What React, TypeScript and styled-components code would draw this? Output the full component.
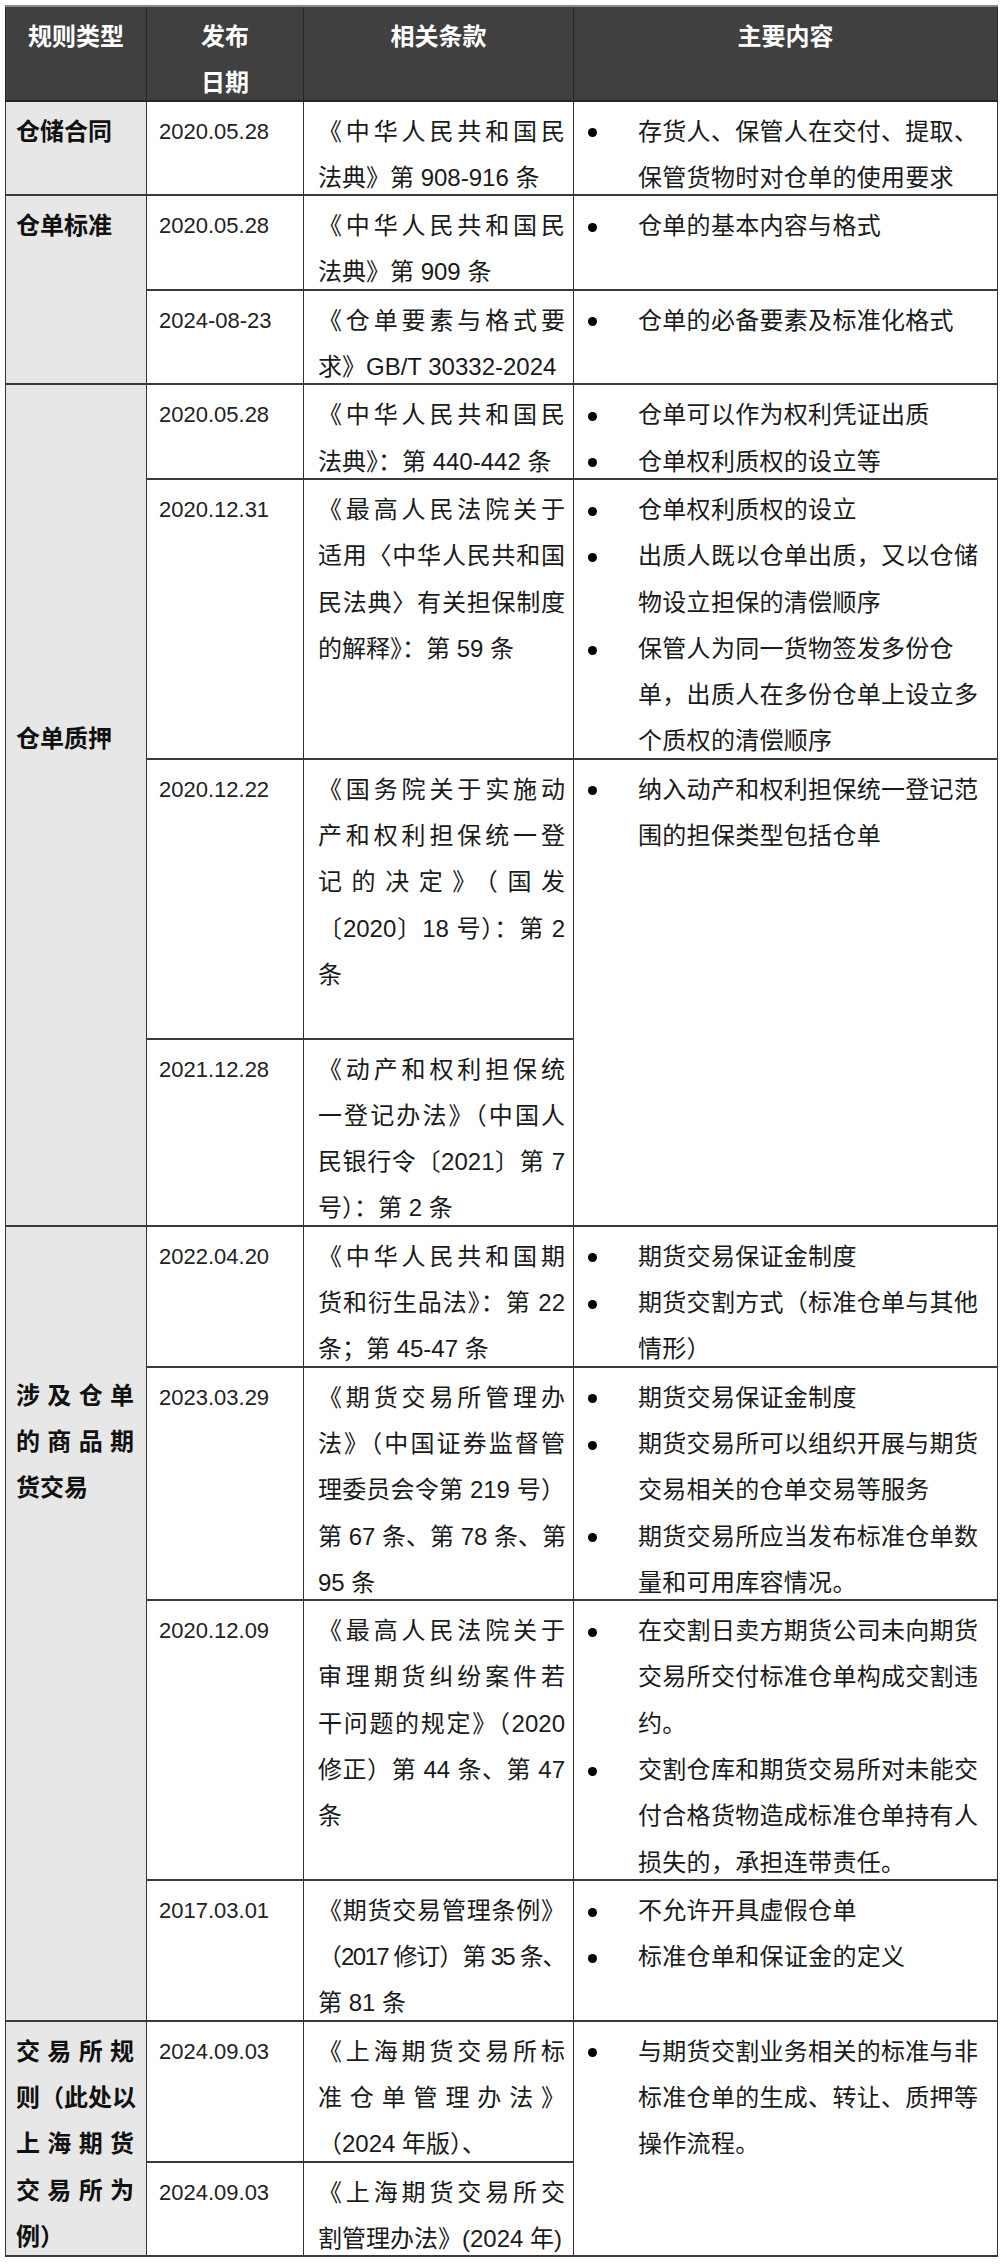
import React, { FC } from "react";
import styled, { createGlobalStyle } from "styled-components";

const LINE = 46.3;

type Row = {
  date: string;
  clause: string[];
  tight?: number[];
  minLines?: number;
  bullets?: string[][];
  span?: number;
};

type Group = {
  title: string[];
  skip?: number;
  rows: Row[];
};

const groups: Group[] = [
  {
    title: ["仓储合同"],
    rows: [
      {
        date: "2020.05.28",
        clause: ["《中华人民共和国民", "法典》第 908-916 条"],
        bullets: [["存货人、保管人在交付、提取、", "保管货物时对仓单的使用要求"]],
      },
    ],
  },
  {
    title: ["仓单标准"],
    rows: [
      {
        date: "2020.05.28",
        clause: ["《中华人民共和国民", "法典》第 909 条"],
        bullets: [["仓单的基本内容与格式"]],
      },
      {
        date: "2024-08-23",
        clause: ["《仓单要素与格式要", "求》GB/T 30332-2024"],
        bullets: [["仓单的必备要素及标准化格式"]],
      },
    ],
  },
  {
    title: ["仓单质押"],
    skip: 7,
    rows: [
      {
        date: "2020.05.28",
        clause: ["《中华人民共和国民", "法典》：第 440-442 条"],
        bullets: [["仓单可以作为权利凭证出质"], ["仓单权利质权的设立等"]],
      },
      {
        date: "2020.12.31",
        clause: [
          "《最高人民法院关于",
          "适用〈中华人民共和国",
          "民法典〉有关担保制度",
          "的解释》：第 59 条",
        ],
        bullets: [
          ["仓单权利质权的设立"],
          ["出质人既以仓单出质，又以仓储", "物设立担保的清偿顺序"],
          [
            "保管人为同一货物签发多份仓",
            "单，出质人在多份仓单上设立多",
            "个质权的清偿顺序",
          ],
        ],
      },
      {
        date: "2020.12.22",
        clause: [
          "《国务院关于实施动",
          "产和权利担保统一登",
          "记的决定》（国发",
          "〔2020〕18 号）：第 2",
          "条",
        ],
        minLines: 6,
        bullets: [["纳入动产和权利担保统一登记范", "围的担保类型包括仓单"]],
        span: 2,
      },
      {
        date: "2021.12.28",
        clause: [
          "《动产和权利担保统",
          "一登记办法》（中国人",
          "民银行令〔2021〕第 7",
          "号）：第 2 条",
        ],
      },
    ],
  },
  {
    title: ["涉及仓单", "的商品期", "货交易"],
    skip: 3,
    rows: [
      {
        date: "2022.04.20",
        clause: ["《中华人民共和国期", "货和衍生品法》：第 22", "条；第 45-47 条"],
        bullets: [["期货交易保证金制度"], ["期货交割方式（标准仓单与其他", "情形）"]],
      },
      {
        date: "2023.03.29",
        clause: [
          "《期货交易所管理办",
          "法》（中国证券监督管",
          "理委员会令第 219 号）",
          "第 67 条、第 78 条、第",
          "95 条",
        ],
        bullets: [
          ["期货交易保证金制度"],
          ["期货交易所可以组织开展与期货", "交易相关的仓单交易等服务"],
          ["期货交易所应当发布标准仓单数", "量和可用库容情况。"],
        ],
      },
      {
        date: "2020.12.09",
        clause: [
          "《最高人民法院关于",
          "审理期货纠纷案件若",
          "干问题的规定》（2020",
          "修正）第 44 条、第 47",
          "条",
        ],
        bullets: [
          ["在交割日卖方期货公司未向期货", "交易所交付标准仓单构成交割违", "约。"],
          ["交割仓库和期货交易所对未能交", "付合格货物造成标准仓单持有人", "损失的，承担连带责任。"],
        ],
      },
      {
        date: "2017.03.01",
        clause: ["《期货交易管理条例》", "（2017 修订）第 35 条、", "第 81 条"],
        tight: [1],
        bullets: [["不允许开具虚假仓单"], ["标准仓单和保证金的定义"]],
      },
    ],
  },
  {
    title: ["交易所规", "则（此处以", "上海期货", "交易所为", "例）"],
    rows: [
      {
        date: "2024.09.03",
        clause: ["《上海期货交易所标", "准仓单管理办法》", "（2024 年版）、"],
        bullets: [
          [
            "与期货交割业务相关的标准与非",
            "标准仓单的生成、转让、质押等",
            "操作流程。",
          ],
        ],
        span: 2,
      },
      {
        date: "2024.09.03",
        clause: ["《上海期货交易所交", "割管理办法》(2024 年)"],
      },
    ],
  },
];

const GlobalStyle = createGlobalStyle`
  html, body {
    margin: 0;
    padding: 0;
    background: #fff;
  }
  body {
    font-family: "Liberation Sans", "Noto Sans CJK SC", sans-serif;
    color: #1a1a1a;
  }
`;

const Table = styled.table`
  border-collapse: collapse;
  table-layout: fixed;
  width: 992px;
  margin: 5px 0 0 5px;
`;

const HeadCell = styled.th`
  background: #404040;
  color: #fff;
  font-size: 24px;
  font-weight: 700;
  text-align: center;
  vertical-align: top;
  padding: 0;
  border: 1px solid #262626;
  border-top: 2px solid #8a8a8a;
  border-bottom-width: 2px;
`;

const Cell = styled.td`
  vertical-align: top;
  padding: 0;
  border-left: 1px solid #333;
  border-right: 1px solid #333;
  border-top: 2px solid #3a3a3a;
  border-bottom: 2px solid #3a3a3a;
`;

const TitleCell = styled(Cell)`
  background: #e7e7e7;
  padding: 0 12px 0 10px;
  font-size: 24px;
  font-weight: 700;
  color: #111;
`;

const DateCell = styled(Cell)`
  padding-left: 12px;
  font-size: 22px;
  color: #222;
`;

const ClauseCell = styled(Cell)`
  padding: 0 8px 0 14px;
  font-size: 24px;
`;

const ContentCell = styled(Cell)`
  padding: 0 8px 0 14px;
  font-size: 24px;
  letter-spacing: 0.3px;
`;

const Lines = styled.div<{ $skip?: number; $minLines?: number }>`
  padding-top: ${(p) => 7 + (p.$skip ?? 0) * LINE}px;
  margin-bottom: -7px;
  min-height: ${(p) => (p.$minLines ?? 0) * LINE}px;
  line-height: ${LINE}px;
`;

const Line = styled.div<{ $justify?: boolean; $tight?: boolean }>`
  white-space: nowrap;
  ${(p) => (p.$justify ? "text-align: justify; text-align-last: justify;" : "")}
  ${(p) => (p.$tight ? "letter-spacing: -1.6px;" : "")}
`;

const BulletItem = styled.div`
  display: flex;
  align-items: flex-start;
`;

const Dot = styled.span`
  flex: none;
  width: 9px;
  height: 9px;
  border-radius: 50%;
  background: #000;
  margin: ${(LINE - 9) / 2 + 1}px 41px 0 0;
`;

const BulletText = styled.div`
  flex: 1;
`;

const JustifiedLines: FC<{
  lines: string[];
  skip?: number;
  minLines?: number;
  tight?: number[];
}> = ({ lines, skip, minLines, tight }) => (
  <Lines $skip={skip} $minLines={minLines}>
    {lines.map((l, i) => (
      <Line key={i} $justify={i < lines.length - 1} $tight={tight?.includes(i)}>
        {l}
      </Line>
    ))}
  </Lines>
);

const Bullets: FC<{ items: string[][] }> = ({ items }) => (
  <Lines>
    {items.map((item, i) => (
      <BulletItem key={i}>
        <Dot />
        <BulletText>
          {item.map((l, j) => (
            <Line key={j}>{l}</Line>
          ))}
        </BulletText>
      </BulletItem>
    ))}
  </Lines>
);

const App: FC = () => {
  return (
    <>
      <GlobalStyle />
      <Table>
        <colgroup>
          <col style={{ width: 141 }} />
          <col style={{ width: 157 }} />
          <col style={{ width: 270 }} />
          <col style={{ width: 424 }} />
        </colgroup>
        <thead>
          <tr>
            <HeadCell>
              <Lines>
                <Line>规则类型</Line>
              </Lines>
            </HeadCell>
            <HeadCell>
              <Lines>
                <Line>发布</Line>
                <Line>日期</Line>
              </Lines>
            </HeadCell>
            <HeadCell>
              <Lines>
                <Line>相关条款</Line>
              </Lines>
            </HeadCell>
            <HeadCell>
              <Lines>
                <Line>主要内容</Line>
              </Lines>
            </HeadCell>
          </tr>
        </thead>
        <tbody>
          {groups.map((g, gi) =>
            g.rows.map((r, ri) => (
              <tr key={`${gi}-${ri}`}>
                {ri === 0 && (
                  <TitleCell rowSpan={g.rows.length}>
                    <JustifiedLines lines={g.title} skip={g.skip} />
                  </TitleCell>
                )}
                <DateCell>
                  <Lines>
                    <Line>{r.date}</Line>
                  </Lines>
                </DateCell>
                <ClauseCell>
                  <JustifiedLines lines={r.clause} minLines={r.minLines} tight={r.tight} />
                </ClauseCell>
                {r.bullets && (
                  <ContentCell rowSpan={r.span ?? 1}>
                    <Bullets items={r.bullets} />
                  </ContentCell>
                )}
              </tr>
            ))
          )}
        </tbody>
      </Table>
    </>
  );
};

export default App;
